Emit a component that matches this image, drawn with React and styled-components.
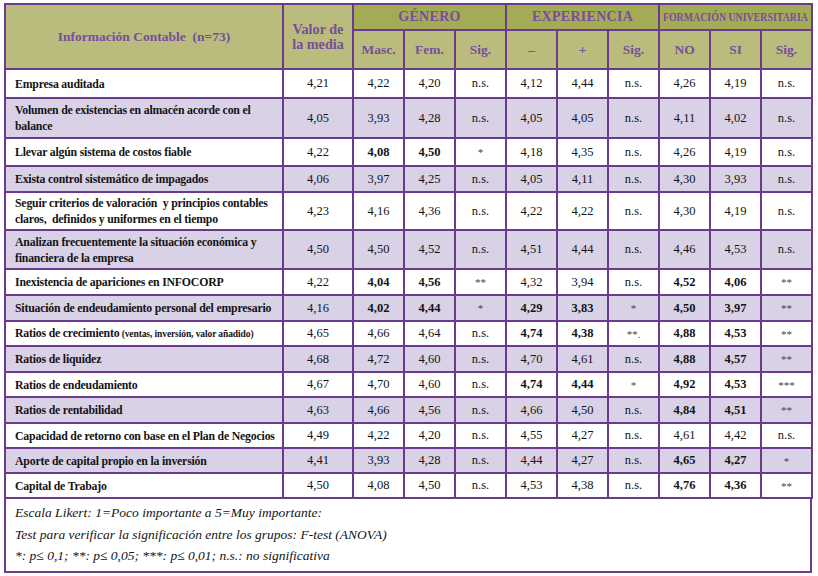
import React from 'react';
import styled, { createGlobalStyle } from 'styled-components';

const SERIF = "'Liberation Serif', 'Times New Roman', serif";

const GlobalStyle = createGlobalStyle`
    body {
        margin: 0;
        background: #ffffff;
        font-family: ${SERIF};
    }
`;

const LINE = '#6a3a8c';
const PURPLE = '#7a4c9f';

const Page = styled.div`
    padding: 3px 6px 0 4px;
    width: 808px;
    font-family: ${SERIF};
`;

const Table = styled.table`
    width: 808px;
    border-collapse: collapse;
    table-layout: fixed;
    border: 2px solid ${LINE};
    font-family: ${SERIF};
`;

const HeadCell = styled.th`
    background: #b9bc7d;
    color: ${PURPLE};
    border: 2px solid ${LINE};
    font-family: ${SERIF};
    font-weight: bold;
    font-size: ${p => p.$size || 13.5}px;
    line-height: ${p => (p.$size > 14 ? 15 : 14)}px;
    text-align: center;
    vertical-align: middle;
    padding: 0 2px;
    height: ${p => p.$h || 'auto'};
`;

const GroupCell = styled(HeadCell)`
    background: #a3ab55;
    height: 24px;
    font-size: 14px;
    letter-spacing: 0.3px;
    overflow: hidden;
    padding: 0;
`;

const Squeeze = styled.span`
    display: inline-block;
    white-space: nowrap;
    transform: scaleX(0.76);
    letter-spacing: 0;
    font-size: 13px;
    margin: 0 -30px;
`;

const Row = styled.tr`
    background: ${p => (p.$stripe ? '#d9d1e6' : '#ffffff')};
    height: ${p => p.$h}px;
`;

const LabelCell = styled.td`
    border: 2px solid ${LINE};
    padding: 0 0 0 9px;
    font-family: ${SERIF};
    font-weight: bold;
    font-size: 11.8px;
    letter-spacing: -0.2px;
    line-height: 16px;
    color: #141414;
    white-space: pre;
    overflow: hidden;
`;

const Small = styled.span`
    font-size: 9.5px;
    letter-spacing: -0.1px;
`;

const NumCell = styled.td`
    border: 2px solid ${LINE};
    text-align: center;
    font-family: ${SERIF};
    font-size: ${p => (p.$star ? 11 : 12.5)}px;
    font-weight: ${p => (p.$bold ? 'bold' : 'normal')};
    color: ${p => (p.$star ? '#444' : '#141414')};
    padding: 0;
`;

const Footer = styled.div`
    border: 2px solid ${LINE};
    border-top: none;
    height: 74px;
    padding: 3px 9px 0;
    box-sizing: border-box;
    font-family: ${SERIF};
    font-style: italic;
    font-size: 13.5px;
    line-height: 21.5px;
    color: #141414;
`;

// [label lines, values, bold indexes, row height, small note]
const rows = [
    [['Empresa auditada'], ['4,21', '4,22', '4,20', 'n.s.', '4,12', '4,44', 'n.s.', '4,26', '4,19', 'n.s.'], [], 29],
    [['Volumen de existencias en almacén acorde con el', 'balance'], ['4,05', '3,93', '4,28', 'n.s.', '4,05', '4,05', 'n.s.', '4,11', '4,02', 'n.s.'], [], 40],
    [['Llevar algún sistema de costos fiable'], ['4,22', '4,08', '4,50', '*', '4,18', '4,35', 'n.s.', '4,26', '4,19', 'n.s.'], [1, 2], 28],
    [['Exista control sistemático de impagados'], ['4,06', '3,97', '4,25', 'n.s.', '4,05', '4,11', 'n.s.', '4,30', '3,93', 'n.s.'], [], 26],
    [['Seguir criterios de valoración  y principios contables', 'claros,  definidos y uniformes en el tiempo'], ['4,23', '4,16', '4,36', 'n.s.', '4,22', '4,22', 'n.s.', '4,30', '4,19', 'n.s.'], [], 38],
    [['Analizan frecuentemente la situación económica y', 'financiera de la empresa'], ['4,50', '4,50', '4,52', 'n.s.', '4,51', '4,44', 'n.s.', '4,46', '4,53', 'n.s.'], [], 39],
    [['Inexistencia de apariciones en INFOCORP'], ['4,22', '4,04', '4,56', '**', '4,32', '3,94', 'n.s.', '4,52', '4,06', '**'], [1, 2, 7, 8], 26],
    [['Situación de endeudamiento personal del empresario'], ['4,16', '4,02', '4,44', '*', '4,29', '3,83', '*', '4,50', '3,97', '**'], [1, 2, 4, 5, 7, 8], 26],
    [['Ratios de crecimiento'], ['4,65', '4,66', '4,64', 'n.s.', '4,74', '4,38', '**.', '4,88', '4,53', '**'], [4, 5, 7, 8], 25, '(ventas, inversión, valor añadido)'],
    [['Ratios de liquidez'], ['4,68', '4,72', '4,60', 'n.s.', '4,70', '4,61', 'n.s.', '4,88', '4,57', '**'], [7, 8], 26],
    [['Ratios de endeudamiento'], ['4,67', '4,70', '4,60', 'n.s.', '4,74', '4,44', '*', '4,92', '4,53', '***'], [4, 5, 7, 8], 25],
    [['Ratios de rentabilidad'], ['4,63', '4,66', '4,56', 'n.s.', '4,66', '4,50', 'n.s.', '4,84', '4,51', '**'], [7, 8], 26],
    [['Capacidad de retorno con base en el Plan de Negocios'], ['4,49', '4,22', '4,20', 'n.s.', '4,55', '4,27', 'n.s.', '4,61', '4,42', 'n.s.'], [], 25],
    [['Aporte de capital propio en la inversión'], ['4,41', '3,93', '4,28', 'n.s.', '4,44', '4,27', 'n.s.', '4,65', '4,27', '*'], [7, 8], 25],
    [['Capital de Trabajo'], ['4,50', '4,08', '4,50', 'n.s.', '4,53', '4,38', 'n.s.', '4,76', '4,36', '**'], [7, 8], 25],
];

const subHeads = ['Masc.', 'Fem.', 'Sig.', '–', '+', 'Sig.', 'NO', 'SI', 'Sig.'];

export default function App() {
    return (
        <Page>
            <GlobalStyle />
            <Table>
                <colgroup>
                    <col style={{ width: 278 }} />
                    <col style={{ width: 70 }} />
                    {subHeads.map((s, i) => (
                        <col key={i} style={{ width: 51 }} />
                    ))}
                </colgroup>
                <thead>
                    <tr>
                        <HeadCell rowSpan={2} $size={13.5}>
                            Información Contable&nbsp; (n=73)
                        </HeadCell>
                        <HeadCell rowSpan={2} $size={14.2}>
                            Valor de
                            <br />
                            la media
                        </HeadCell>
                        <GroupCell colSpan={3}>GÉNERO</GroupCell>
                        <GroupCell colSpan={3}>EXPERIENCIA</GroupCell>
                        <GroupCell colSpan={3}>
                            <Squeeze>FORMACIÓN UNIVERSITARIA</Squeeze>
                        </GroupCell>
                    </tr>
                    <tr>
                        {subHeads.map((s, i) => (
                            <HeadCell key={i} $h="37px">
                                {s}
                            </HeadCell>
                        ))}
                    </tr>
                </thead>
                <tbody>
                    {rows.map(([lines, values, bold, h, small], i) => (
                        <Row key={lines[0]} $stripe={i % 2 === 1} $h={h}>
                            <LabelCell>
                                {lines.join('\n')}
                                {small && <Small> {small}</Small>}
                            </LabelCell>
                            {values.map((v, j) => (
                                <NumCell
                                    key={j}
                                    $bold={bold.includes(j)}
                                    $star={v.startsWith('*')}
                                >
                                    {v}
                                </NumCell>
                            ))}
                        </Row>
                    ))}
                </tbody>
            </Table>
            <Footer>
                <div>Escala Likert: 1=Poco importante a 5=Muy importante:</div>
                <div>Test para verificar la significación entre los grupos: F-test (ANOVA)</div>
                <div>*: p≤ 0,1; **: p≤ 0,05; ***: p≤ 0,01; n.s.: no significativa</div>
            </Footer>
        </Page>
    );
}
